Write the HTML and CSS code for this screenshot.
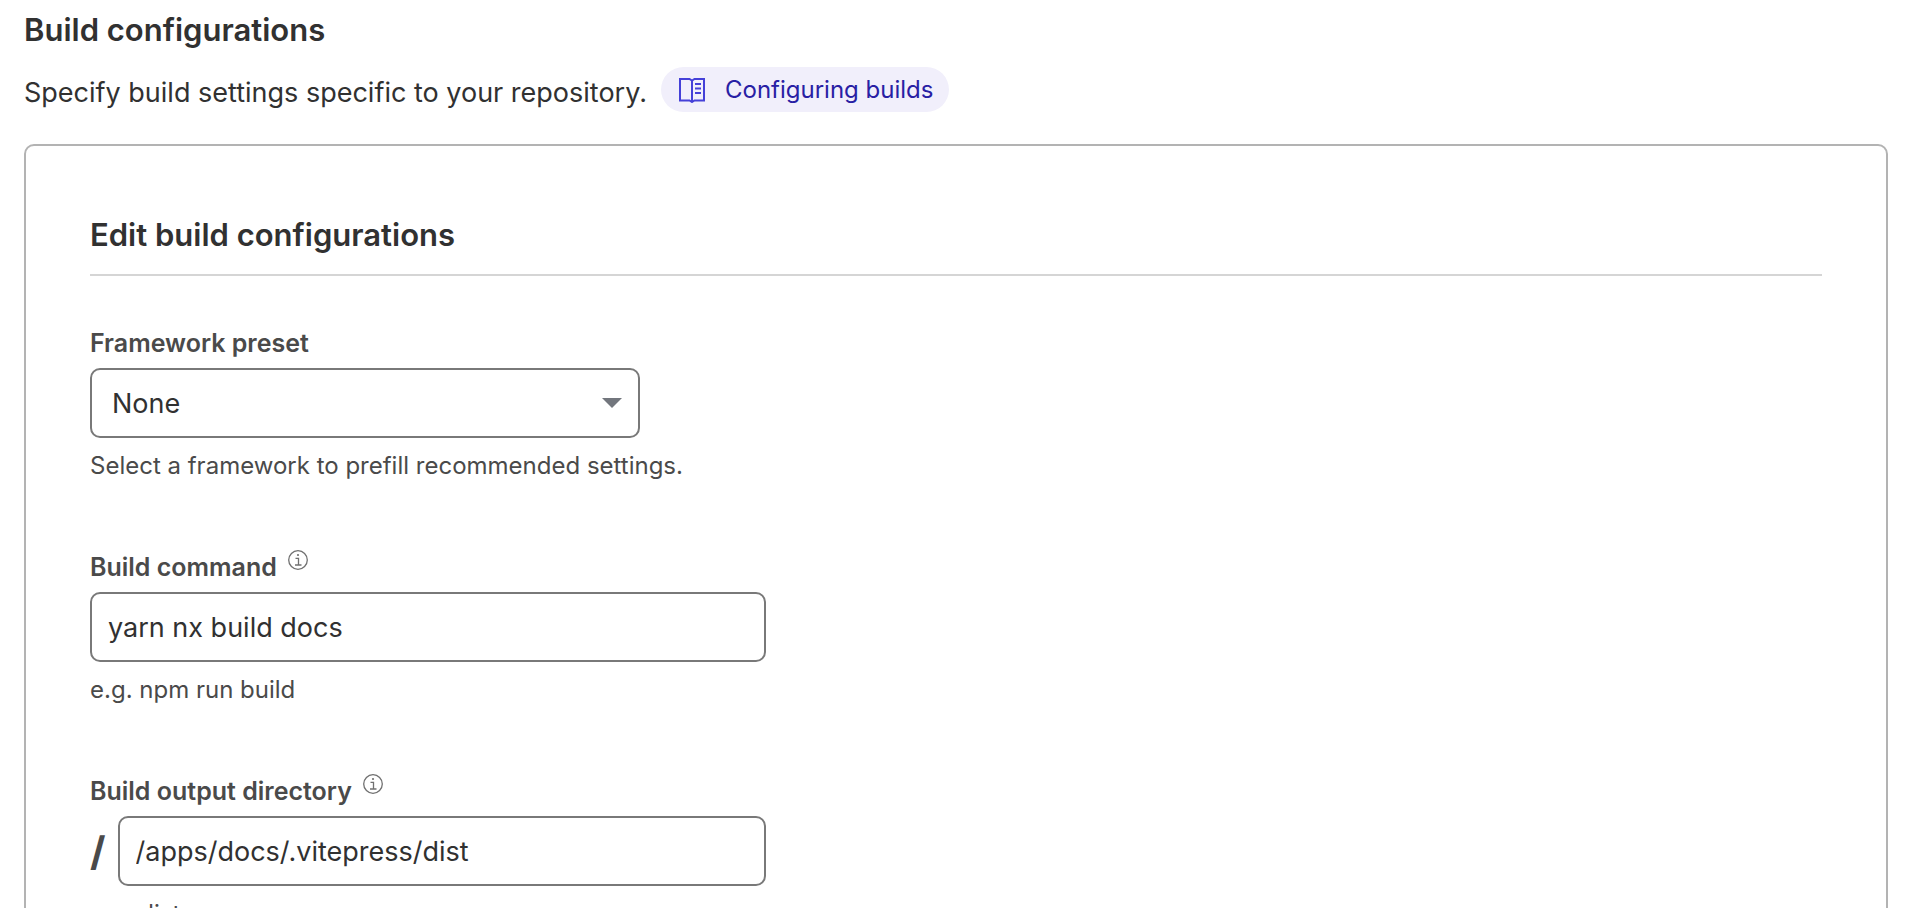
FILE: index.html
```html
<!DOCTYPE html>
<html lang="en">
<head>
<meta charset="utf-8">
<meta name="viewport" content="width=device-width, initial-scale=1">
<title>Build configurations</title>
<link rel="stylesheet" href="styles.css">
</head>
<body>
<main class="page">
  <h1 class="title">Build configurations</h1>
  <div class="intro">
    <p class="intro-text">Specify build settings specific to your repository.</p>
    <a class="doc-link" href="#configuring-builds">
      <svg class="doc-icon" viewBox="0 0 26 26" aria-hidden="true">
        <path d="M1 2h9.500l2.500 1.500L15.500 2H25v21.500h-9.500L13 25l-2.500-1.500H1zM13 3.500V25" fill="none" stroke="currentColor" stroke-width="2"/>
        <path d="M16 7h6M16 11.500h6M16 16h6" fill="none" stroke="currentColor" stroke-width="2"/>
      </svg>
      <span>Configuring builds</span>
    </a>
  </div>
  <form class="panel">
    <h2 class="panel-title">Edit build configurations</h2>
    <div class="field">
      <div class="label-row"><label class="label" for="preset">Framework preset</label></div>
      <div class="select-wrap">
        <select class="control select" id="preset"><option>None</option></select>
        <svg class="caret" viewBox="0 0 20 10" aria-hidden="true"><path d="M0 0h20L10 10z" fill="currentColor"/></svg>
      </div>
      <p class="help">Select a framework to prefill recommended settings.</p>
    </div>
    <div class="field">
      <div class="label-row">
        <label class="label" for="command">Build command</label>
        <svg class="info" viewBox="0 0 20 20" aria-hidden="true"><circle cx="10" cy="10" r="9.300" fill="none" stroke="currentColor" stroke-width="1.300"/><path d="M7.500 8.300h3v6.500M7 15h6.500" fill="none" stroke="currentColor" stroke-width="1.300"/><circle cx="10" cy="5" r="1.100" fill="currentColor"/></svg>
      </div>
      <div class="control-row"><input class="control" id="command" type="text" value="yarn nx build docs"></div>
      <p class="help">e.g. npm run build</p>
    </div>
    <div class="field">
      <div class="label-row">
        <label class="label" for="output">Build output directory</label>
        <svg class="info" viewBox="0 0 20 20" aria-hidden="true"><circle cx="10" cy="10" r="9.300" fill="none" stroke="currentColor" stroke-width="1.300"/><path d="M7.500 8.300h3v6.500M7 15h6.500" fill="none" stroke="currentColor" stroke-width="1.300"/><circle cx="10" cy="5" r="1.100" fill="currentColor"/></svg>
      </div>
      <div class="control-row"><span class="slash">/</span><input class="control" id="output" type="text" value="/apps/docs/.vitepress/dist"></div>
      <p class="help">e.g. dist</p>
    </div>
  </form>
</main>
</body>
</html>
```

FILE: styles.css
```css
* {
  box-sizing: border-box;
}

body {
  margin: 0;
  height: 100vh;
  overflow: hidden;
  background: #fff;
  color: #313131;
  font-family: Inter, "Liberation Sans", sans-serif;
  font-size: 27px;
}

h1, h2, p {
  margin: 0;
}

.page {
  padding: 10px 30px 0 24px;
}

.title, .panel-title {
  font-size: 31px;
  font-weight: 600;
  line-height: 40px;
}

.intro {
  display: flex;
  align-items: flex-start;
  gap: 14px;
  margin-top: 17px;
}

.intro-text {
  line-height: 52px;
}

.doc-link {
  display: flex;
  align-items: center;
  gap: 20px;
  height: 45px;
  padding: 0 16px 0 18px;
  border-radius: 23px;
  background: #f1effb;
  color: #2820a4;
  font-size: 24px;
  text-decoration: none;
}

.doc-icon {
  width: 26px;
  height: 26px;
  color: #4540d8;
}

.panel {
  margin-top: 25px;
  padding: 69px 64px;
  border: 2px solid #b3b3b3;
  border-radius: 10px;
}

.panel-title {
  padding-bottom: 19px;
  border-bottom: 2px solid #d5d5d5;
}

.field {
  width: 676px;
  max-width: 100%;
  margin-top: 66px;
}

.panel-title + .field {
  margin-top: 50px;
}

.label-row {
  display: flex;
  align-items: flex-start;
  gap: 11px;
  height: 42px;
}

.label {
  color: #4a4a4a;
  font-size: 25px;
  font-weight: 600;
  line-height: 34px;
}

.info {
  width: 20px;
  height: 20px;
  color: #707070;
}

.select-wrap {
  position: relative;
  width: 550px;
  max-width: 100%;
}

.control-row {
  display: flex;
  align-items: center;
  gap: 12px;
}

.control {
  width: 100%;
  min-width: 0;
  height: 70px;
  padding: 0 16px;
  border: 2px solid #797979;
  border-radius: 10px;
  background: #fff;
  color: #313131;
  font: inherit;
}

.select {
  display: block;
  padding: 0 20px;
  appearance: none;
}

.caret {
  position: absolute;
  top: 30px;
  right: 18px;
  width: 20px;
  height: 10px;
  color: #72767d;
  pointer-events: none;
}

.slash {
  color: #4a4a4a;
  font-size: 40px;
  font-weight: 700;
}

.help {
  margin-top: 10px;
  color: #4a4a4a;
  font-size: 24px;
  line-height: 36px;
}
```
